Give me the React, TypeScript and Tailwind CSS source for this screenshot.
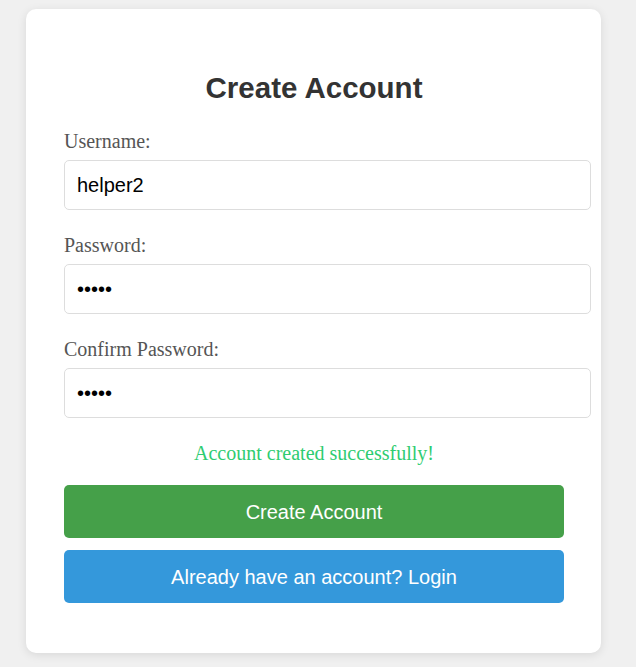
import React from "react";

const serif = "font-['Liberation_Serif',serif]";
const sans = "font-['Liberation_Sans',Arial,sans-serif]";

function Field({ label, type, value }: { label: string; type: string; value: string }) {
  return (
    <div className="mb-6">
      <label className={`block h-[22px] mb-2 text-[20px] leading-[22px] text-[#555] ${serif}`}>{label}</label>
      <input
        type={type}
        defaultValue={value}
        readOnly
        className={`block box-border w-[527px] h-[50px] px-3 border border-[#ddd] rounded-[5px] bg-white text-[20px] text-black outline-none ${sans}`}
      />
    </div>
  );
}

export default function App() {
  return (
    <div className="min-h-screen w-full bg-[#f0f0f0] pt-[9px] pl-[26px]">
      <div className="w-[575px] h-[644px] bg-white rounded-[10px] shadow-[0_2px_10px_rgba(0,0,0,0.1)] pt-[63px] pl-[38px]">
        <h2 className={`w-[500px] h-[32px] mb-[26px] text-center text-[29.5px] leading-[32px] font-bold text-[#333] ${sans}`}>
          Create Account
        </h2>
        <Field label="Username:" type="text" value="helper2" />
        <Field label="Password:" type="password" value="12345" />
        <Field label="Confirm Password:" type="password" value="12345" />
        <p className={`w-[500px] h-[22px] mb-[21px] text-center text-[20px] leading-[22px] text-[#2ecc71] ${serif}`}>
          Account created successfully!
        </p>
        <button className={`block w-[500px] h-[53px] mb-3 rounded-[5px] bg-[#45a049] text-white text-[20px] ${sans}`}>
          Create Account
        </button>
        <button className={`block w-[500px] h-[53px] rounded-[5px] bg-[#3498db] text-white text-[20px] ${sans}`}>
          Already have an account? Login
        </button>
      </div>
    </div>
  );
}
